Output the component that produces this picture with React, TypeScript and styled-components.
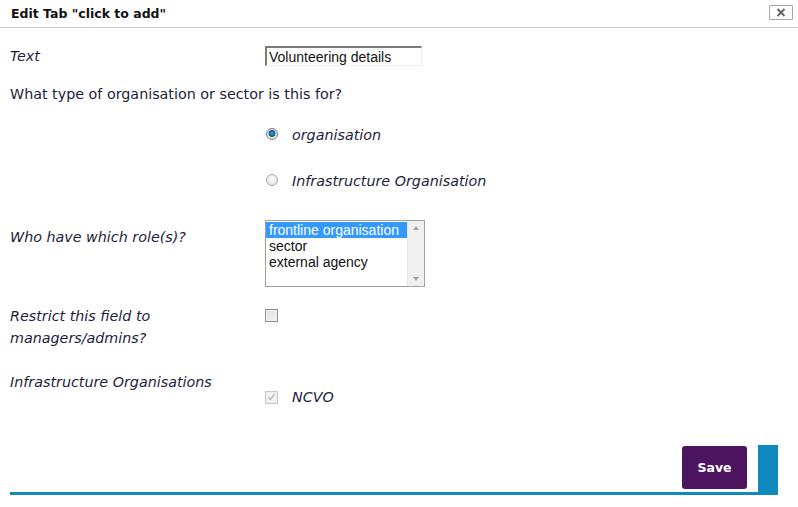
import React from "react";
import styled, { createGlobalStyle } from "styled-components";

const Global = createGlobalStyle`
  html, body { margin: 0; padding: 0; background: #fff; }
  body { font-family: "DejaVu Sans", Verdana, sans-serif; color: #1e1e3c; }
  * { box-sizing: border-box; }
`;

const Dialog = styled.div`
  width: 798px;
  height: 507px;
  background: #fff;
  display: flex;
  flex-direction: column;
`;

const Header = styled.div`
  height: 28px;
  border-bottom: 1px solid #cccccc;
  display: flex;
  align-items: center;
  justify-content: space-between;
  padding: 0 5px 1px 11px;
`;

const Title = styled.h1`
  margin: 0;
  font-size: 12.5px;
  font-weight: bold;
  color: #111;
`;

const CloseButton = styled.button`
  width: 24px;
  height: 15px;
  margin-top: -2px;
  border: 1px solid #a8a8a8;
  border-radius: 1px;
  background: #fff;
  padding: 0;
  display: flex;
  align-items: center;
  justify-content: center;
  cursor: pointer;
`;

const Body = styled.div`
  padding: 17px 0 0 10px;
  display: flex;
  flex-direction: column;
`;

const FieldRow = styled.div<{ $align?: string; $mt?: number }>`
  display: grid;
  grid-template-columns: 255px 1fr;
  align-items: ${(p) => p.$align || "start"};
  margin-top: ${(p) => p.$mt || 0}px;
`;

const Label = styled.div<{ $italic?: boolean; $pt?: number }>`
  font-size: 14.3px;
  line-height: 22px;
  font-style: ${(p) => (p.$italic ? "italic" : "normal")};
  padding-top: ${(p) => p.$pt || 0}px;
`;

const TextInput = styled.input`
  width: 157px;
  height: 20px;
  border-style: solid;
  border-width: 2px 1px 1px 2px;
  border-color: #7a7a7a #f0f0f0 #f0f0f0 #7a7a7a;
  padding: 0 2px;
  font-family: "Liberation Sans", Arial, sans-serif;
  font-size: 14px;
  color: #111;
  outline: none;
`;

const Question = styled.div`
  font-size: 14.3px;
  line-height: 22px;
  margin-top: 16px;
`;

const OptionList = styled.div`
  margin-top: 7px;
  padding-left: 255px;
  display: flex;
  flex-direction: column;
`;

const RadioOption = styled.label`
  height: 46px;
  display: flex;
  align-items: center;
  gap: 14px;
  font-size: 14.3px;
  font-style: italic;
  padding-left: 1px;
`;

const RadioDot = styled.span<{ $checked?: boolean }>`
  width: 12px;
  height: 12px;
  border-radius: 50%;
  border: 1px solid ${(p) => (p.$checked ? "#6c7c8a" : "#a6a6a6")};
  background: ${(p) =>
    p.$checked
      ? "radial-gradient(circle at 50% 45%, #4aa7d8 0, #1c6a9d 2.2px, #2a5f86 3.2px, #dfe6ec 3.8px, #f4f4f4 100%)"
      : "radial-gradient(circle at 50% 40%, #fafafa 0, #e2e2e2 100%)"};
  margin-top: -2px;
  flex: none;
`;

const ListBox = styled.div`
  width: 160px;
  height: 67px;
  border: 1px solid #a0a0a0;
  display: flex;
  font-family: "Liberation Sans", Arial, sans-serif;
  font-size: 14px;
  color: #111;
  background: #fff;
`;

const ListItems = styled.div`
  flex: 1;
  display: flex;
  flex-direction: column;
  padding-top: 1px;
`;

const ListItem = styled.div<{ $selected?: boolean }>`
  height: 16px;
  line-height: 16px;
  padding-left: 3px;
  white-space: nowrap;
  background: ${(p) => (p.$selected ? "#3399ff" : "transparent")};
  color: ${(p) => (p.$selected ? "#fff" : "#111")};
`;

const ScrollTrack = styled.div`
  width: 17px;
  background: #f0f0f0;
  border-left: 1px solid #e6e6e6;
  display: flex;
  flex-direction: column;
  justify-content: space-between;
  align-items: center;
  padding: 5px 0;
`;

const Arrow = styled.span<{ $down?: boolean }>`
  width: 0;
  height: 0;
  border-left: 3.5px solid transparent;
  border-right: 3.5px solid transparent;
  ${(p) =>
    p.$down ? "border-top: 4px solid #a3a3a3;" : "border-bottom: 4px solid #a3a3a3;"}
`;

const CheckBox = styled.span<{ $disabled?: boolean; $mt?: number }>`
  width: 13px;
  height: 13px;
  border: 1px solid ${(p) => (p.$disabled ? "#c8c8c8" : "#8f8f8f")};
  background: ${(p) =>
    p.$disabled ? "#f4f4f4" : "linear-gradient(135deg, #dcdcdc 0%, #f6f6f6 100%)"};
  box-shadow: inset 0 0 0 1px ${(p) => (p.$disabled ? "#ececec" : "#f2f2f2")};
  display: flex;
  align-items: center;
  justify-content: center;
  margin-top: ${(p) => p.$mt || 0}px;
  flex: none;
`;

const CheckOption = styled.label`
  display: flex;
  align-items: center;
  gap: 14px;
  font-size: 14.3px;
  font-style: italic;
  line-height: 22px;
  margin-top: 15px;
`;

const Footer = styled.div`
  margin: 37px 20px 0 10px;
  height: 50px;
  border-bottom: 3px solid #0f89be;
  border-right: 20px solid #0f89be;
  display: flex;
  justify-content: flex-end;
  align-items: flex-start;
`;

const SaveButton = styled.button`
  width: 65px;
  height: 43px;
  margin: 1px 11px 0 0;
  background: #4c145e;
  color: #fff;
  border: none;
  border-radius: 3px;
  font-family: "DejaVu Sans", Verdana, sans-serif;
  font-weight: bold;
  font-size: 12.5px;
  cursor: pointer;
`;

export default function App() {
  return (
    <>
      <Global />
      <Dialog>
        <Header>
          <Title>Edit Tab "click to add"</Title>
          <CloseButton aria-label="close">
            <svg width="10" height="9" viewBox="0 0 10 9">
              <path d="M1.5 1 L8.5 8 M8.5 1 L1.5 8" stroke="#666" strokeWidth="2" />
            </svg>
          </CloseButton>
        </Header>
        <Body>
          <FieldRow $align="center">
            <Label $italic>Text</Label>
            <TextInput defaultValue="Volunteering details" />
          </FieldRow>
          <Question>What type of organisation or sector is this for?</Question>
          <OptionList>
            <RadioOption>
              <RadioDot $checked />
              organisation
            </RadioOption>
            <RadioOption>
              <RadioDot />
              Infrastructure Organisation
            </RadioOption>
          </OptionList>
          <FieldRow $mt={16}>
            <Label $italic $pt={6}>Who have which role(s)?</Label>
            <ListBox role="listbox">
              <ListItems>
                <ListItem $selected>frontline organisation</ListItem>
                <ListItem>sector</ListItem>
                <ListItem>external agency</ListItem>
              </ListItems>
              <ScrollTrack>
                <Arrow />
                <Arrow $down />
              </ScrollTrack>
            </ListBox>
          </FieldRow>
          <FieldRow $mt={18}>
            <Label $italic>
              Restrict this field to
              <br />
              managers/admins?
            </Label>
            <CheckBox $mt={4} />
          </FieldRow>
          <FieldRow $mt={22}>
            <Label $italic>Infrastructure Organisations</Label>
            <CheckOption>
              <CheckBox $disabled>
                <svg width="9" height="8" viewBox="0 0 9 8">
                  <path d="M1.5 4 L3.5 6.5 L7.5 1" stroke="#b8b8b8" strokeWidth="1.3" fill="none" />
                </svg>
              </CheckBox>
              NCVO
            </CheckOption>
          </FieldRow>
        </Body>
        <Footer>
          <SaveButton>Save</SaveButton>
        </Footer>
      </Dialog>
    </>
  );
}
